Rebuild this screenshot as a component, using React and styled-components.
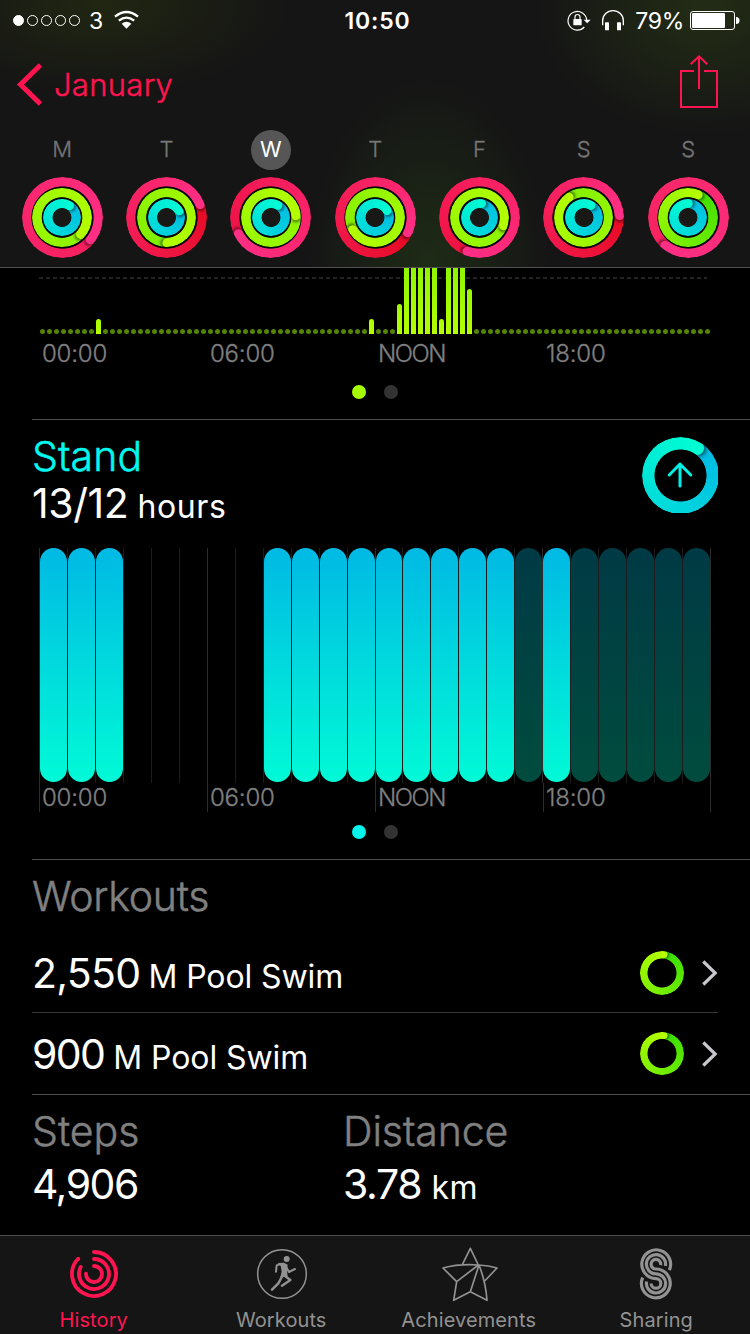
import React from "react";
import styled, { createGlobalStyle } from "styled-components";

const GlobalStyle = createGlobalStyle`
  *, *::before, *::after { box-sizing: border-box; }
  body { margin: 0; background: #000; }
`;

const PINK = "#ff1450";

const Screen = styled.div`
  width: 750px;
  height: 1334px;
  overflow: hidden;
  display: flex;
  flex-direction: column;
  background: #000;
  color: #fff;
  font-family: Inter, "Liberation Sans", sans-serif;
  font-weight: 400;
  white-space: nowrap;
`;

/* ---------- text ---------- */

const StatusText = styled.span`
  font-size: 23px;
  line-height: 24px;
  letter-spacing: ${(p) => p.$track || 0}px;
`;

const BackLabel = styled.span`
  font-size: 31px;
  line-height: 31px;
  letter-spacing: 0.3px;
  font-weight: 300;
  -webkit-text-stroke: 0.4px currentColor;
  color: ${PINK};
`;

const Title = styled.h2`
  margin: 0;
  font-size: 41px;
  line-height: ${(p) => p.$line || 50}px;
  letter-spacing: ${(p) => p.$track || 0}px;
  font-weight: 300;
  -webkit-text-stroke: 0.5px currentColor;
  color: ${(p) => p.$color || "#808080"};
`;

const Value = styled.span`
  font-size: 41px;
  line-height: ${(p) => p.$line || 56}px;
  letter-spacing: ${(p) => p.$track || 0}px;
`;

const Unit = styled.span`
  font-size: 32px;
  line-height: ${(p) => p.$line || 56}px;
  letter-spacing: ${(p) => p.$track || 0}px;
  margin-left: ${(p) => p.$gap || 9}px;
`;

/* ---------- header ---------- */

const Header = styled.header`
  height: 268px;
  flex: none;
  border-bottom: 1px solid #505050;
  background:
    radial-gradient(ellipse 120px 190px at 428px 268px, #1e2c16 0%, rgba(30, 44, 22, 0) 100%),
    radial-gradient(ellipse 170px 125px at 705px 10px, #232d15 0%, rgba(35, 45, 21, 0) 100%),
    radial-gradient(ellipse 190px 90px at 100px 5px, #212612 0%, rgba(33, 38, 18, 0) 100%),
    #151515;
`;

const StatusBar = styled.div`
  height: 40px;
  display: grid;
  grid-template-columns: 1fr auto 1fr;
  align-items: center;
  padding: 1px 11px 0 13px;
`;

const StatusGroup = styled.div`
  display: flex;
  align-items: center;
  justify-content: ${(p) => (p.$end ? "flex-end" : "flex-start")};
`;

const Clock = styled.span`
  padding-left: 3px;
  font-size: 23px;
  line-height: 24px;
  font-weight: 600;
  letter-spacing: 0.8px;
`;

const Signal = styled.div`
  display: flex;
  gap: 3px;
  margin-right: 9px;
`;

const SignalDot = styled.i`
  width: 11px;
  height: 11px;
  border-radius: 50%;
  border: 1px solid #fff;
  background: ${(p) => (p.$on ? "#fff" : "transparent")};
`;

const Icon = styled.svg`
  display: block;
  flex: none;
  overflow: visible;
  fill: none;
  margin: ${(p) => p.$margin || 0};
`;

const NavBar = styled.div`
  height: 89px;
  display: flex;
  justify-content: space-between;
  align-items: flex-start;
  padding: 14px 31px 0 16px;
`;

const Back = styled.div`
  display: flex;
  align-items: center;
  gap: 11px;
  height: 60px;
`;

const Week = styled.div`
  display: grid;
  grid-template-columns: repeat(7, 104.33px);
  padding-left: 10px;
`;

const Day = styled.div`
  display: flex;
  flex-direction: column;
  align-items: center;
  gap: 7px;
`;

const DayName = styled.div`
  width: 40px;
  height: 40px;
  margin-top: 1px;
  padding-bottom: 2px;
  border-radius: 50%;
  display: grid;
  place-items: center;
  font-size: 22px;
  line-height: 22px;
  font-weight: ${(p) => (p.$on ? 400 : 300)};
  -webkit-text-stroke: ${(p) => (p.$on ? 0 : 0.3)}px currentColor;
  color: ${(p) => (p.$on ? "#fff" : "#767676")};
  background: ${(p) => (p.$on ? "#565656" : "transparent")};
`;

/* ---------- rings ---------- */

const RingStack = styled.div`
  display: grid;
  place-items: center;
  width: ${(p) => p.$size}px;
  height: ${(p) => p.$size}px;
  flex: none;
  overflow: ${(p) => (p.$clip ? "hidden" : "visible")};
  background: ${(p) => p.$back || "transparent"};
  grid-template: 100% / 100%;
  > * { grid-area: 1 / 1; }
`;

const Band = styled.div`
  position: relative;
  width: ${(p) => p.$r * 2}px;
  height: ${(p) => p.$r * 2}px;
  flex: none;
  border-radius: 50%;
  background: conic-gradient(from ${(p) => p.$angle}deg, ${(p) => p.$from}, ${(p) => p.$to});
  mask-image: radial-gradient(
    circle closest-side,
    transparent ${(p) => p.$r - p.$w - 0.4}px,
    #000 ${(p) => p.$r - p.$w + 0.4}px
  );
`;

const Cap = styled.i`
  position: absolute;
  left: 50%;
  top: 50%;
  width: ${(p) => p.$w}px;
  height: ${(p) => p.$w}px;
  margin: ${(p) => -p.$w / 2}px;
  border-radius: 50%;
  background: ${(p) => p.$to};
  transform: rotate(${(p) => p.$angle}deg) translateY(${(p) => -(p.$r - p.$w / 2)}px);
  box-shadow: ${(p) => p.$w * 0.22}px 0 ${(p) => p.$w * 0.3}px rgba(0, 0, 0, 0.5);
`;

const Hub = styled.i`
  width: 19px;
  height: 19px;
  border-radius: 50%;
  background: #181917;
`;

function Ring({ r, w, angle, from, to }) {
  return (
    <Band $r={r} $w={w} $angle={angle} $from={from} $to={to}>
      <Cap $r={r} $w={w} $angle={angle} $to={to} />
    </Band>
  );
}

const days = [
  { name: "M", move: [128, "#f41f5c"], exercise: [132, "#8df400"], stand: 34 },
  { name: "T", move: [69, "#e70a24"], exercise: [180, "#7cee00"], stand: 62 },
  { name: "W", on: true, move: [244, "#ee1346"], exercise: [86, "#8df400"], stand: 31 },
  { name: "T", move: [115, "#e70a24"], exercise: [242, "#85f000"], stand: 61 },
  { name: "F", move: [201, "#ef1240"], exercise: [109, "#8df400"], stand: 8 },
  { name: "S", move: [87, "#e70a24"], exercise: [325, "#82f000"], stand: 32 },
  { name: "S", move: [220, "#f6235f"], exercise: [25, "#3fdf00"], stand: 3 },
];

/* ---------- content ---------- */

const Section = styled.section`
  flex: none;
  height: ${(p) => p.$h}px;
  padding: ${(p) => p.$pad || 0};
`;

const Rule = styled.hr`
  flex: none;
  height: 1px;
  border: 0;
  margin: 0 ${(p) => (p.$inset ? 32 : 0)}px 0 32px;
  background: ${(p) => (p.$inset ? "#353535" : "#4c4c4c")};
`;

const ExercisePlot = styled.div`
  height: 66px;
  width: 672px;
  margin-left: 39px;
  display: grid;
  grid-template-columns: repeat(96, 7px);
  align-items: end;
  background: repeating-linear-gradient(90deg, #242424 0 4px, transparent 4px 7px) 0 9px / 668px 2px no-repeat;
`;

const ExerciseBar = styled.i`
  width: 5px;
  margin-left: 1px;
  height: ${(p) => p.$h}px;
  border-radius: ${(p) => (p.$h === 5 ? "50%" : p.$h > 60 ? "0" : "2.5px 2.5px 0 0")};
  background: ${(p) => (p.$h === 5 ? "#548400" : "linear-gradient(#8ff600, #b4ff00) bottom / 5px 66px")};
`;

const peaks = { 8: 15, 47: 15, 51: 30, 52: 66, 53: 66, 54: 66, 55: 66, 56: 66, 57: 15, 58: 66, 59: 66, 60: 66, 61: 45 };
const quarterHours = Array.from({ length: 96 }, (_, i) => peaks[i] || 5);

const Axis = styled.div`
  display: grid;
  grid-template-columns: repeat(3, 168px) 1fr;
  margin-left: 39px;
  width: 672px;
  height: ${(p) => (p.$lines ? 29 : 38)}px;
`;

const Tick = styled.div`
  border-left: 1px solid ${(p) => (p.$lines ? "#2c2c2c" : "transparent")};
  border-right: ${(p) => (p.$lines && p.$last ? "1px solid #2c2c2c" : "0")};
  padding: ${(p) => (p.$lines ? 0 : 1)}px 0 0 2px;
  font-size: 24px;
  line-height: ${(p) => (p.$lines ? 29 : 38)}px;
  letter-spacing: ${(p) => (p.$word ? -1.5 : -0.2)}px;
  font-weight: 300;
  -webkit-text-stroke: 0.3px currentColor;
  color: #808080;
`;

const Pager = styled.div`
  display: flex;
  gap: 18px;
  justify-content: center;
  padding-top: 13px;
`;

const PageDot = styled.i`
  width: 14px;
  height: 14px;
  border-radius: 50%;
  background: ${(p) => p.$color || "#333"};
`;

const StandHead = styled.div`
  display: flex;
  justify-content: space-between;
  align-items: flex-start;
  padding: 17px 32px 0 32px;
  height: 128px;
`;

const Stack = styled.div`
  display: flex;
  flex-direction: column;
  margin-top: ${(p) => p.$lift || 0}px;
`;

const StandPlot = styled.div`
  display: grid;
  grid-template-columns: repeat(24, 1fr);
  width: 672px;
  height: 235px;
  margin-left: 39px;
  border-right: 1px solid #2c2c2c;
`;

const Hour = styled.div`
  border-left: 1px solid ${(p) => (p.$major ? "#2c2c2c" : "#1d1d1d")};
  &::before {
    content: "";
    display: ${(p) => (p.$state ? "block" : "none")};
    height: 234px;
    border-radius: 13.5px;
    background: ${(p) =>
      p.$state === "on" ? "linear-gradient(#00b9e4, #00fad6)" : "linear-gradient(#003a45, #004c3e)"};
  }
`;

const hours = Array.from({ length: 24 }, (_, h) => {
  if (h < 3 || (h >= 8 && h <= 16) || h === 18) return "on";
  return h >= 17 ? "dim" : null;
});

const WorkoutRow = styled.div`
  flex: none;
  height: ${(p) => p.$h}px;
  display: flex;
  align-items: center;
  padding: ${(p) => p.$top || 0}px 32px 0 32px;
`;

const WorkoutText = styled.div`
  flex: 1;
  padding-top: 4px;
`;

const Disclosure = styled.span`
  margin-left: 18px;
`;

const Totals = styled.section`
  flex: none;
  height: 140px;
  display: grid;
  grid-template-columns: 311px 1fr;
  padding: 11px 0 0 32px;
`;

const TabBar = styled.nav`
  flex: none;
  height: 99px;
  border-top: 1px solid #4c4c4c;
  background: #151515;
  display: grid;
  grid-template-columns: repeat(4, 187.5px);
`;

const Tab = styled.div`
  display: flex;
  flex-direction: column;
  align-items: center;
  color: ${(p) => (p.$on ? PINK : "#929292")};
  font-size: 20px;
  line-height: 24px;
  letter-spacing: 0.1px;
`;

const TabIcon = styled.div`
  height: 72px;
  display: grid;
  place-items: center;
  padding: 4px 0 0 ${(p) => p.$nudge || 0}px;
`;

/* ---------- icons ---------- */

const Wifi = () => (
  <Icon width="25" height="18" viewBox="0 0 75 54" $margin="0 0 1px 11px">
    <g stroke="#fff" strokeWidth="7">
      <path d="M3 17 Q37.500 -11 72 17" />
      <path d="M14.500 29 Q37.500 11 60.500 29" />
    </g>
    <path d="M23 38 Q37.500 27 52 38 L37.500 53Z" fill="#fff" />
  </Icon>
);

const RotationLock = () => (
  <Icon width="24" height="20" viewBox="0 0 72 60" $margin="0 11px 2px 0">
    <path d="M52 51 A28 28 0 1 1 59 30" stroke="#fff" strokeWidth="3.500" />
    <path d="M50 29 H71 L60.500 40Z" fill="#fff" />
    <rect x="19" y="27" width="25" height="19" rx="2" fill="#fff" />
    <path d="M24 28 V21 a7.500 7.500 0 0 1 15 0 V28" stroke="#fff" strokeWidth="3.500" />
  </Icon>
);

const Headphones = () => (
  <Icon width="22" height="20" viewBox="0 0 66 60" $margin="0 11px 1px 0">
    <path d="M2 46 V32 a31 30 0 0 1 62 0 V46" stroke="#fff" strokeWidth="4" />
    <rect x="9" y="37" width="12" height="24" rx="2" fill="#fff" />
    <rect x="45" y="37" width="12" height="24" rx="2" fill="#fff" />
  </Icon>
);

const Battery = () => (
  <Icon width="49" height="19" viewBox="0 0 49 19" $margin="0 0 0 6px">
    <rect x="0.500" y="0.500" width="44" height="18" rx="2.500" stroke="#fff" />
    <rect x="2" y="2" width="33" height="15" rx="1" fill="#fff" />
    <path d="M46 6 a3.500 3.500 0 0 1 0 7Z" fill="#fff" />
  </Icon>
);

const Share = () => (
  <Icon width="38" height="53" viewBox="0 0 114 159" stroke={PINK} strokeWidth="6" $margin="1px 1px 0 0">
    <path d="M42 48 H3 V156 H111 V48 H72 M57 4 V102 M32 28 L57 4 L82 28" />
  </Icon>
);

const arc = (cx, cy, r, deg) => {
  const a = (deg * Math.PI) / 180;
  return `M${cx} ${cy - r} A${r} ${r} 0 1 1 ${cx + r * Math.sin(a)} ${cy - r * Math.cos(a)}`;
};

const HistoryIcon = () => (
  <Icon width="48" height="48" viewBox="0 0 144 144" stroke={PINK} strokeWidth="11.500" strokeLinecap="round">
    <path d={arc(72, 72, 66, 314)} />
    <path d={arc(72, 72, 45, 298)} />
    <path d={arc(72, 72, 24, 273)} />
  </Icon>
);

const RunnerIcon = () => (
  <Icon width="50" height="50" viewBox="771 57 150 150" stroke="#929292">
    <circle cx="846" cy="132" r="73" strokeWidth="4.500" />
    <circle cx="860" cy="87" r="9" fill="#929292" stroke="none" />
    <path d="M833 99 L852 98 L863 104 L861 120 L863 140 L841 141 L845 124 L842 108Z" fill="#929292" stroke="none" />
    <g strokeWidth="6" strokeLinecap="round" strokeLinejoin="round">
      <path d="M842 102 L830 106 L828 125" />
      <path d="M857 108 L867 126 L885 117" />
      <path strokeWidth="7.500" d="M852 136 L871 150 L846 167" />
      <path strokeWidth="7.500" d="M847 138 L835 160 L816 179" />
    </g>
  </Icon>
);

const StarIcon = () => (
  <Icon
    width="56"
    height="54"
    viewBox="199 51 168 162"
    stroke="#929292"
    strokeWidth="5"
    strokeLinejoin="round"
  >
    <path d="M260 104 L284 55 L308 105 M243 155 L202 114 Q250 101 308 105 Q340 107 364 114 L327 153" />
    <path d="M308 105 L243 155 L234 211 L284 185 L334 211 Q330 155 310 105 L284 185" />
  </Icon>
);

const SharingIcon = () => (
  <Icon width="32" height="52" viewBox="0 0 32 52" stroke="#929292" strokeWidth="3.200">
    <path d="M29.300 22.200 A14.400 14.400 0 1 0 16 30.600 A4.800 4.800 0 1 1 11.200 35.400" />
    <path d="M25.400 18 A9.600 9.600 0 1 0 16 25.800 A9.600 9.600 0 1 1 6.600 33.500" />
    <path d="M20.600 17.200 A4.800 4.800 0 1 0 16 21 A14.400 14.400 0 1 1 2.700 29.500" />
  </Icon>
);

const Chevron = () => (
  <Icon width="16" height="26" viewBox="0 0 16 26" stroke="#c7c7cc" strokeWidth="3.200">
    <path d="M1.300 1.500 L13.200 13 L1.300 24.500" />
  </Icon>
);

const axis = ["00:00", "06:00", "NOON", "18:00"];

const TimeAxis = ({ lines }) => (
  <Axis $lines={lines}>
    {axis.map((t, i) => (
      <Tick key={t} $lines={lines} $last={i === 3} $word={t === "NOON"}>{t}</Tick>
    ))}
  </Axis>
);

const Workout = ({ amount, h, top, track, gap }) => (
  <WorkoutRow $h={h} $top={top}>
    <WorkoutText>
      <Value $line={50} $track={track}>{amount}</Value>
      <Unit $line={50} $gap={gap} $track={-0.1}>M Pool Swim</Unit>
    </WorkoutText>
    <RingStack $size={44}>
      <Ring r={21.8} w={7.3} angle={8} from="#36de00" to="#b6ff00" />
    </RingStack>
    <Disclosure>
      <Chevron />
    </Disclosure>
  </WorkoutRow>
);

export default function App() {
  return (
    <Screen>
      <GlobalStyle />
      <Header>
        <StatusBar>
          <StatusGroup>
            <Signal>
              {[1, 0, 0, 0, 0].map((on, i) => (
                <SignalDot key={i} $on={on} />
              ))}
            </Signal>
            <StatusText>3</StatusText>
            <Wifi />
          </StatusGroup>
          <Clock>10:50</Clock>
          <StatusGroup $end>
            <RotationLock />
            <Headphones />
            <StatusText $track={-0.3}>79%</StatusText>
            <Battery />
          </StatusGroup>
        </StatusBar>
        <NavBar>
          <Back>
            <Icon width="27" height="43" viewBox="0 0 27 43" stroke={PINK} strokeWidth="5">
              <path d="M24.500 2 L4.500 21.500 L24.500 41" />
            </Icon>
            <BackLabel>January</BackLabel>
          </Back>
          <Share />
        </NavBar>
        <Week>
          {days.map((d, i) => (
            <Day key={i}>
              <DayName $on={d.on}>{d.name}</DayName>
              <RingStack $size={81} $back="radial-gradient(#060606 0 38px, transparent 38px)">
                <Ring r={40.5} w={9.4} angle={d.move[0]} from={d.move[1]} to="#ff2f86" />
                <Ring r={29.7} w={9.4} angle={d.exercise[0]} from={d.exercise[1]} to="#b4ff00" />
                <Ring r={18.8} w={9.4} angle={d.stand} from="#00bbe2" to="#00fcd4" />
                <Hub />
              </RingStack>
            </Day>
          ))}
        </Week>
      </Header>

      <Section $h={151}>
        <ExercisePlot>
          {quarterHours.map((h, i) => (
            <ExerciseBar key={i} $h={h} />
          ))}
        </ExercisePlot>
        <TimeAxis />
        <Pager>
          <PageDot $color="#a6ff00" />
          <PageDot />
        </Pager>
      </Section>
      <Rule />

      <Section $h={439}>
        <StandHead>
          <Stack $lift={-3}>
            <Title $line={44} $track={0.1} $color="#00f8ee">Stand</Title>
            <div>
              <Value $line={50} $track={-0.4}>13/12</Value>
              <Unit $line={50} $track={0.6} $gap={9}>hours</Unit>
            </div>
          </Stack>
          <RingStack $size={76} $clip>
            <Ring r={38.5} w={12.5} angle={32} from="#00b8e4" to="#00ffd2" />
            <Icon width="26" height="26" viewBox="0 0 26 26" stroke="#00f0e6" strokeWidth="3" strokeLinecap="round" strokeLinejoin="round">
              <path d="M13 24 V2 M2.200 13 L13 2 L23.800 13" />
            </Icon>
          </RingStack>
        </StandHead>
        <StandPlot>
          {hours.map((s, i) => (
            <Hour key={i} $state={s} $major={i % 6 === 0} />
          ))}
        </StandPlot>
        <TimeAxis lines />
        <Pager>
          <PageDot $color="#00f5ea" />
          <PageDot />
        </Pager>
      </Section>
      <Rule />

      <Section $h={72} $pad="11px 0 0 32px">
        <Title $track={-0.25}>Workouts</Title>
      </Section>
      <Workout amount="2,550" h={80} top={2} track={-0.7} gap={8} />
      <Rule $inset />
      <Workout amount="900" h={81} top={0} track={-1.6} gap={9} />
      <Rule />

      <Totals>
        <Stack>
          <Title>Steps</Title>
          <Value $track={-1.5}>4,906</Value>
        </Stack>
        <Stack>
          <Title $track={-0.1}>Distance</Title>
          <div>
            <Value $track={-1.3}>3.78</Value>
            <Unit $track={0.6} $gap={10}>km</Unit>
          </div>
        </Stack>
      </Totals>

      <TabBar>
        <Tab $on>
          <TabIcon><HistoryIcon /></TabIcon>
          History
        </Tab>
        <Tab>
          <TabIcon $nudge={1}><RunnerIcon /></TabIcon>
          Workouts
        </Tab>
        <Tab>
          <TabIcon $nudge={2}><StarIcon /></TabIcon>
          Achievements
        </Tab>
        <Tab>
          <TabIcon><SharingIcon /></TabIcon>
          Sharing
        </Tab>
      </TabBar>
    </Screen>
  );
}
